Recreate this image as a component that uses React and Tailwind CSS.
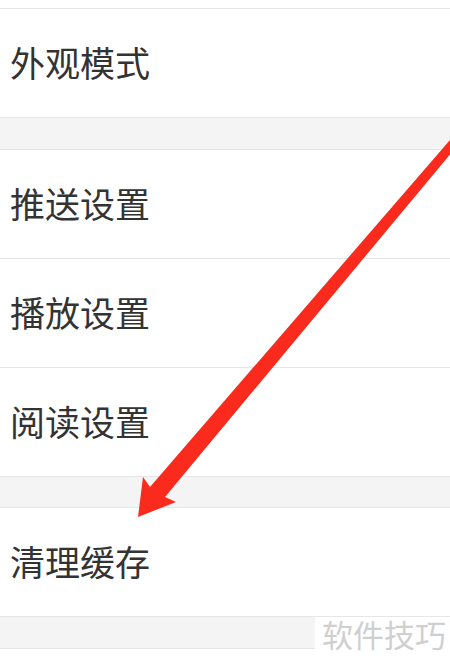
const font = { fontFamily: '"Noto Sans CJK SC", "Noto Sans", sans-serif' }

function Row({ label }) {
  return (
    <div className="h-[109px] flex items-center pl-[10px] pb-[3px] bg-white border-b border-[#e6e6e6]">
      <span className="text-[35px] leading-none text-[#333333]">{label}</span>
    </div>
  )
}

function Gap({ h = 'h-[32px]' }) {
  return <div className={`${h} bg-[#f4f4f4] border-b border-[#e6e6e6]`} />
}

export default function App() {
  return (
    <div className="relative w-[450px] h-[666px] overflow-hidden bg-white" style={font}>
      <div className="h-[9px] bg-white border-b border-[#e6e6e6]" />
      <Row label="外观模式" />
      <Gap />
      <Row label="推送设置" />
      <Row label="播放设置" />
      <Row label="阅读设置" />
      <Gap h="h-[31px]" />
      <Row label="清理缓存" />
      <Gap h="h-[32px]" />

      {/* watermark */}
      <div className="absolute left-[315px] top-[617px] w-[135px] h-[33px] bg-white flex items-center justify-end pr-[4px]">
        <span className="text-[31px] leading-none text-[#cfcfcf]">软件技巧</span>
      </div>

      {/* red annotation arrow */}
      <svg className="absolute inset-0" width="450" height="666" viewBox="0 0 450 666">
        <polygon
          points="462,126 150,487 143,477 138,517 176,502 165,497 462,140"
          fill="#fa2a1c"
        />
      </svg>
    </div>
  )
}
